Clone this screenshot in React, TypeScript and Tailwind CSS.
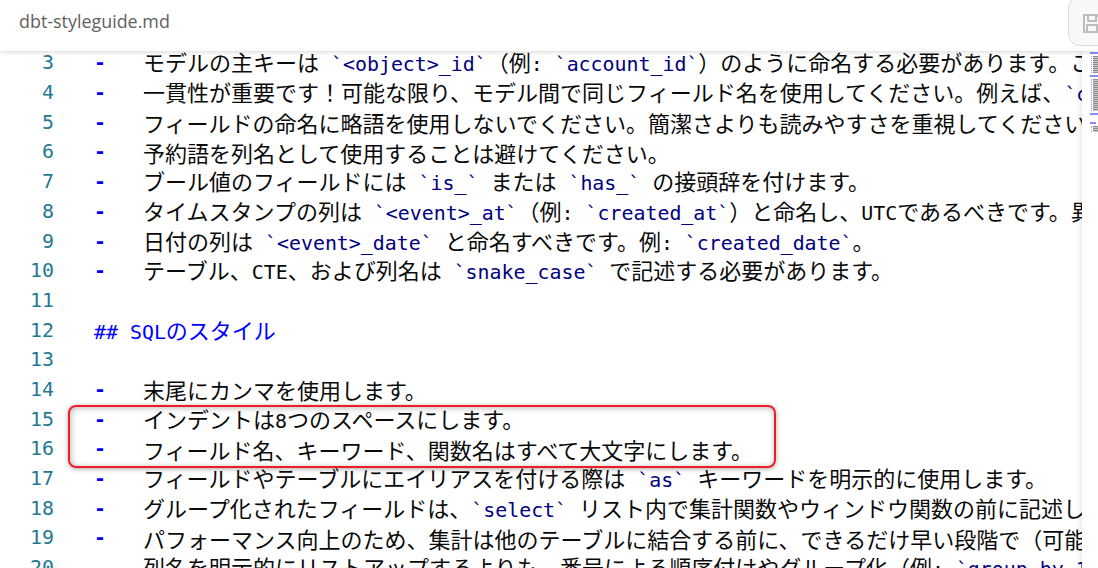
const MONO = "font-['DejaVu_Sans_Mono','Liberation_Mono',monospace]";

type Line = { n: number; dash?: boolean; text?: string; heading?: string };

const lines: Line[] = [
  { n: 3, dash: true, text: "モデルの主キーは `<object>_id`（例: `account_id`）のように命名する必要があります。こ" },
  { n: 4, dash: true, text: "一貫性が重要です！可能な限り、モデル間で同じフィールド名を使用してください。例えば、`customer_id`" },
  { n: 5, dash: true, text: "フィールドの命名に略語を使用しないでください。簡潔さよりも読みやすさを重視してください。" },
  { n: 6, dash: true, text: "予約語を列名として使用することは避けてください。" },
  { n: 7, dash: true, text: "ブール値のフィールドには `is_` または `has_` の接頭辞を付けます。" },
  { n: 8, dash: true, text: "タイムスタンプの列は `<event>_at`（例: `created_at`）と命名し、UTCであるべきです。異なる" },
  { n: 9, dash: true, text: "日付の列は `<event>_date` と命名すべきです。例: `created_date`。" },
  { n: 10, dash: true, text: "テーブル、CTE、および列名は `snake_case` で記述する必要があります。" },
  { n: 11 },
  { n: 12, heading: "## SQLのスタイル" },
  { n: 13 },
  { n: 14, dash: true, text: "末尾にカンマを使用します。" },
  { n: 15, dash: true, text: "インデントは8つのスペースにします。" },
  { n: 16, dash: true, text: "フィールド名、キーワード、関数名はすべて大文字にします。" },
  { n: 17, dash: true, text: "フィールドやテーブルにエイリアスを付ける際は `as` キーワードを明示的に使用します。" },
  { n: 18, dash: true, text: "グループ化されたフィールドは、`select` リスト内で集計関数やウィンドウ関数の前に記述します。" },
  { n: 19, dash: true, text: "パフォーマンス向上のため、集計は他のテーブルに結合する前に、できるだけ早い段階で（可能な限り" },
  { n: 20, text: "列名を明示的にリストアップするよりも、番号による順序付けやグループ化（例: `group by 1, 2`）を" },
];

function Runs({ text, color }: { text: string; color?: string }) {
  const parts = text.match(/[\x20-\x7e]+|[^\x20-\x7e]+/g) ?? [];
  return (
    <>
      {parts.map((p, i) =>
        /^[\x20-\x7e]/.test(p) ? (
          <span key={i} className={`${MONO} text-[19.9px]`} style={color ? { color } : undefined}>
            {p}
          </span>
        ) : (
          <span key={i} style={color ? { color } : undefined}>
            {p}
          </span>
        ),
      )}
    </>
  );
}

function Body({ text }: { text: string }) {
  const parts = text.split(/(`[^`]*`)/);
  return (
    <>
      {parts.map((p, i) =>
        p.startsWith("`") ? (
          <span key={i} className="text-[#000080]">
            <Runs text={p} />
          </span>
        ) : (
          <Runs key={i} text={p} />
        ),
      )}
    </>
  );
}

function MiniBlue({ w }: { w: string }) {
  return <div className={`h-[2px] ${w} bg-[#8a8aff]`} />;
}

function MiniGray({ h }: { h: string }) {
  return (
    <div className={`ml-[1px] ${h} border-l border-dotted border-[#9a9aff] pl-[1px]`}>
      <div className="h-full w-full bg-[repeating-linear-gradient(180deg,#8f8f8f_0,#8f8f8f_1px,#c4c4c4_1px,#c4c4c4_2px)]" />
    </div>
  );
}

export default function App() {
  return (
    <div className="relative flex h-[568px] w-[1098px] flex-col overflow-hidden bg-white font-['Noto_Sans_CJK_JP','Noto_Sans',sans-serif] text-[22px] text-[#0a0a0a]">
      <header className="relative z-10 flex h-[51px] shrink-0 items-start justify-between bg-white pl-[19px] shadow-[0_1px_5px_rgba(0,0,0,0.16)]">
        <span className="mt-[8px] font-['Open_Sans','Noto_Sans',sans-serif] text-[17.9px] text-[#5f5f5f]">dbt-styleguide.md</span>
        <div className="mr-[-14px] mt-[-4px] flex h-[50px] w-[44px] items-center justify-start rounded-b-xl rounded-tl-xl border border-[#dcdcdc] bg-[#f8f8f8] pl-[14px] pt-[4px]">
          <svg className="shrink-0" width="18" height="19" viewBox="0 0 18 19" fill="none" stroke="#bdbdbd" strokeWidth="2">
            <path d="M1 1h13l3 3v14H1z" />
            <path d="M5 1v6h8V1M4 18v-7h10v7" />
          </svg>
        </div>
      </header>
      <div className="flex min-h-0 flex-1">
        <main className="-mt-[3px] min-w-0 flex-1 overflow-hidden">
          {lines.map((l) => (
            <div key={l.n} className="flex h-[29.7px] items-center whitespace-nowrap">
              <span className={`${MONO} w-[54px] shrink-0 pt-[1px] text-right text-[19.9px] text-[#237893]`}>{l.n}</span>
              <span className={`${MONO} w-[89px] shrink-0 pl-[40px] pt-[1px] text-[19.9px] font-bold text-[#0000ff]`}>{l.dash ? "-" : ""}</span>
              {l.text && (
                <span className="leading-none">
                  <Body text={l.text} />
                </span>
              )}
              {l.heading && (
                <span className="-ml-[49px] leading-none">
                  <Runs text={l.heading} color="#0000ff" />
                </span>
              )}
            </div>
          ))}
        </main>
        <aside className="w-[16px] shrink-0 bg-white shadow-[-2px_0_5px_rgba(0,0,0,0.09)]">
          <div className="mt-[1px] flex flex-col gap-[2px] pl-[8px]">
            <MiniBlue w="w-[8px]" />
            <MiniGray h="h-[17px]" />
            <MiniBlue w="w-[8px]" />
            <MiniGray h="h-[32px]" />
            <MiniBlue w="w-[8px]" />
            <div className="h-[3px]" />
            <MiniBlue w="w-[6px]" />
            <MiniGray h="h-[6px]" />
          </div>
        </aside>
      </div>
      <div className="absolute left-[68px] top-[405px] h-[63px] w-[708px] rounded-lg border-2 border-[#ee1c25] shadow-[0_1px_5px_rgba(0,0,0,0.35),inset_1px_1px_6px_rgba(0,0,0,0.28)]" />
    </div>
  );
}
